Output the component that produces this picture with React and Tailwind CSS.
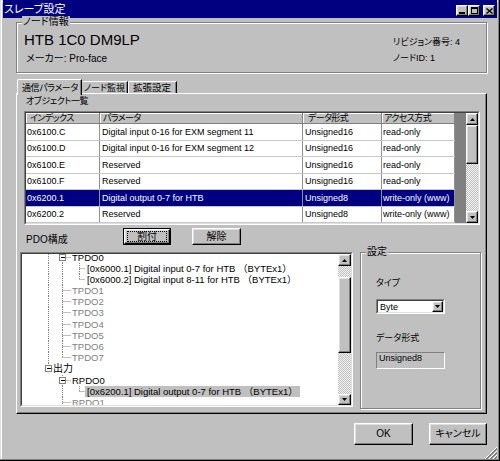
import React from "react";

// win98-ish bevels
const raised =
  "border border-t-white border-l-white border-r-black border-b-black shadow-[inset_-1px_-1px_0_#808080,inset_1px_1px_0_#dfdfdf]";
const etched = "border border-[#808080] shadow-[1px_1px_0_#fff,inset_1px_1px_0_#fff]";
const track =
  "bg-[image:repeating-conic-gradient(#c0c0c0_0_25%,#f2f2f2_0_50%)] bg-[length:2px_2px]";

const Sunken = ({ className = "", inner = "", children }) => (
  <div className={`border border-t-[#808080] border-l-[#808080] border-r-white border-b-white ${className}`}>
    <div className={`h-full w-full border border-t-[#404040] border-l-[#404040] border-r-[#dfdfdf] border-b-[#dfdfdf] ${inner}`}>
      {children}
    </div>
  </div>
);

const Arrow = ({ up }) => (
  <svg width="5" height="3" viewBox="0 0 5 3">
    <polygon points={up ? "2.5,0 5,3 0,3" : "0,0 5,0 2.5,3"} fill="#000" />
  </svg>
);

const TitleBtn = ({ children, className = "" }) => (
  <div className={`${raised} flex h-[11px] w-[12px] items-center justify-center bg-[#c0c0c0] ${className}`}>
    {children}
  </div>
);

const objects = [
  { idx: "0x6100.C", name: "Digital input 0-16 for EXM segment 11", type: "Unsigned16", access: "read-only" },
  { idx: "0x6100.D", name: "Digital input 0-16 for EXM segment 12", type: "Unsigned16", access: "read-only" },
  { idx: "0x6100.E", name: "Reserved", type: "Unsigned16", access: "read-only" },
  { idx: "0x6100.F", name: "Reserved", type: "Unsigned16", access: "read-only" },
  { idx: "0x6200.1", name: "Digital output 0-7 for HTB", type: "Unsigned8", access: "write-only (www)", sel: true },
  { idx: "0x6200.2", name: "Reserved", type: "Unsigned8", access: "write-only (www)" },
];

// tree connector x positions (svg coords, tree content starts at page x 22)
const L0 = 26.5;
const L1 = 40.5;
const L2 = 57.5;
const RH = 11.2;
const MID = 5.5;

const tree = [
  { w: 50, label: "TPDO0", segs: [["v", L0], ["v", L1], ["b", L2], ["h", L1, 49], ["box", L1]] },
  { w: 63, entry: true, label: "[0x6000.1] Digital input 0-7 for HTB （BYTEx1）", segs: [["v", L0], ["v", L1], ["v", L2], ["h", L2, 63]] },
  { w: 63, entry: true, label: "[0x6000.2] Digital input 8-11 for HTB （BYTEx1）", segs: [["v", L0], ["v", L1], ["t", L2], ["h", L2, 63]] },
  ...["TPDO1", "TPDO2", "TPDO3", "TPDO4", "TPDO5", "TPDO6"].map((l) => ({
    w: 50,
    gray: true,
    label: l,
    segs: [["v", L0], ["v", L1], ["h", L1, 49]],
  })),
  { w: 50, gray: true, label: "TPDO7", segs: [["v", L0], ["t", L1], ["h", L1, 49]] },
  { w: 31, label: "出力", segs: [["t", L0], ["h", L0, 31], ["box", L0]] },
  { w: 50, label: "RPDO0", segs: [["v", L1], ["b", L2], ["h", L1, 49], ["box", L1]] },
  { w: 63, entry: true, sel: true, label: "[0x6200.1] Digital output 0-7 for HTB （BYTEx1）", segs: [["v", L1], ["t", L2], ["h", L2, 63]] },
  { w: 50, gray: true, label: "RPDO1", segs: [["v", L1], ["h", L1, 49]] },
];

const Seg = ({ s }) => {
  const line = { stroke: "#808080", strokeDasharray: "1 1" };
  if (s[0] === "v") return <line x1={s[1]} y1={0} x2={s[1]} y2={RH} {...line} />;
  if (s[0] === "t") return <line x1={s[1]} y1={0} x2={s[1]} y2={MID} {...line} />;
  if (s[0] === "b") return <line x1={s[1]} y1={MID} x2={s[1]} y2={RH} {...line} />;
  if (s[0] === "h") return <line x1={s[1]} y1={MID} x2={s[2]} y2={MID} {...line} />;
  return (
    <g>
      <rect x={s[1] - 3} y={MID - 3} width="6" height="6" fill="#fff" stroke="#808080" />
      <line x1={s[1] - 1.5} y1={MID} x2={s[1] + 2.5} y2={MID} stroke="#000" />
    </g>
  );
};

export default function App() {
  return (
    <div className="flex h-[461px] w-[500px] flex-col overflow-hidden bg-[#c0c0c0] font-['Liberation_Sans','Noto_Sans_CJK_JP',sans-serif] text-[10px] leading-[12px] text-black shadow-[inset_-1px_-1px_0_#000,inset_-2px_-2px_0_#808080,inset_1px_1px_0_#dfdfdf,inset_2px_2px_0_#fff] [font-feature-settings:'palt']">
      {/* Title bar */}
      <div className="mx-[3px] flex h-[18px] shrink-0 items-start justify-between bg-[#000080] pl-[1px] pr-[2px]">
        <span className="mt-[3px] text-[11px] leading-[13px] text-white">スレーブ設定</span>
        <div className="mt-[5px] flex">
          <TitleBtn>
            <svg width="6" height="7" viewBox="0 0 6 7">
              <rect x="0" y="5" width="6" height="2" fill="#000" />
            </svg>
          </TitleBtn>
          <TitleBtn>
            <svg width="7" height="7" viewBox="0 0 7 7">
              <rect x="0.5" y="0.5" width="6" height="6" fill="none" stroke="#000" />
              <rect x="0" y="0" width="7" height="2" fill="#000" />
            </svg>
          </TitleBtn>
          <TitleBtn className="ml-[3px]">
            <svg width="7" height="6" viewBox="0 0 7 6">
              <path d="M0.5 0.5 L6.5 5.5 M6.5 0.5 L0.5 5.5" stroke="#000" strokeWidth="1.4" />
            </svg>
          </TitleBtn>
        </div>
      </div>

      {/* Node info group */}
      <div className={`${etched} ml-[16px] mt-[4px] h-[51px] w-[471px] shrink-0`}>
        <div className="-mt-[7px] ml-[5px] w-fit bg-[#c0c0c0] px-[1px]">ノード情報</div>
        <div className="flex">
          <div className="flex-1 pl-[7px]">
            <div className="mt-[3px] text-[15px] leading-[18px]">HTB 1C0 DM9LP</div>
            <div className="ml-[2px] mt-[4px]">メーカー: Pro-face</div>
          </div>
          <div className="w-[93px] pt-[8px] text-[9px]">
            <div>リビジョン番号: 4</div>
            <div className="mt-[4px]">ノードID: 1</div>
          </div>
        </div>
      </div>

      {/* Tabs */}
      <div className="ml-[17px] mt-[6px] flex h-[14px] shrink-0 items-start whitespace-nowrap">
        <div className="relative z-10 h-[16px] w-[65px] rounded-tl-[2px] border-l border-r border-t border-l-white border-r-black border-t-white bg-[#c0c0c0] pl-[4px] pt-[2px] text-[9px] tracking-[-0.4px] shadow-[inset_-1px_0_0_#808080]">
          通信パラメータ
        </div>
        <div className="mt-[2px] h-[12px] w-[46px] rounded-tl-[2px] border-r border-t border-r-black border-t-white pl-[2px] text-[9px] shadow-[inset_-1px_0_0_#808080]">
          ノード監視
        </div>
        <div className="mt-[2px] h-[12px] w-[49px] rounded-tl-[2px] border-l border-r border-t border-l-white border-r-black border-t-white pl-[4px] text-[9.5px] shadow-[inset_-1px_0_0_#808080]">
          拡張設定
        </div>
      </div>

      {/* Tab panel */}
      <div className="ml-[16px] h-[321px] w-[471px] shrink-0 border border-b-black border-l-white border-r-black border-t-white shadow-[inset_-1px_-1px_0_#808080]">
        <div className="ml-[9px] mt-[1px] text-[9px] tracking-[-0.4px]">オブジェクト一覧</div>

        {/* Object list */}
        <Sunken className="ml-[7px] mt-[4px] h-[114px] w-[456px]" inner="flex bg-white">
          <div className="flex w-[429px] flex-col">
            <div className="flex h-[11px] bg-[#c0c0c0] text-[9px] leading-[10px] tracking-[-0.6px] whitespace-nowrap">
              <div className="w-[74px] border-b border-r border-b-[#808080] border-r-[#808080] pl-[4px] shadow-[inset_1px_1px_0_#fff]">インデックス</div>
              <div className="w-[203px] border-b border-r border-b-[#808080] border-r-[#808080] pl-[3px] shadow-[inset_1px_1px_0_#fff]">パラメータ</div>
              <div className="w-[79px] border-b border-r border-b-[#808080] border-r-[#808080] pl-[5px] shadow-[inset_1px_1px_0_#fff]">データ形式</div>
              <div className="w-[73px] border-b border-r border-b-[#808080] border-r-[#808080] pl-[2px] shadow-[inset_1px_1px_0_#fff]">アクセス方式</div>
            </div>
            {objects.map((r) => (
              <div
                key={r.idx}
                className={`flex h-[16.5px] border-b border-[#c8c8c8] text-[9px] whitespace-nowrap ${
                  r.sel ? "bg-[#000080] text-white" : "bg-white text-black"
                }`}
              >
                <div className="flex w-[74px] items-center border-r border-[#909090] pl-[1px]">{r.idx}</div>
                <div className="flex w-[203px] items-center overflow-hidden border-r border-[#909090] pl-[2px]">{r.name}</div>
                <div className="flex w-[79px] items-center border-r border-[#909090] pl-[2px]">{r.type}</div>
                <div className="flex w-[73px] items-center border-r border-[#909090] pl-[1px]">{r.access}</div>
              </div>
            ))}
          </div>
          <div className="w-[11px] bg-[#808080]" />
          <div className="flex w-[12px] flex-col">
            <div className={`${raised} flex h-[12px] items-center justify-center bg-[#c0c0c0]`}>
              <Arrow up />
            </div>
            <div className={`${raised} h-[39px] bg-[#c0c0c0]`} />
            <div className={`flex-1 ${track}`} />
            <div className={`${raised} flex h-[12px] items-center justify-center bg-[#c0c0c0]`}>
              <Arrow />
            </div>
          </div>
        </Sunken>

        {/* PDO buttons */}
        <div className="mt-[3px] flex h-[17px]">
          <div className="ml-[9px] mt-[6px] w-[97px]">PDO構成</div>
          <div className="h-[17px] w-[48px] border border-black">
            <div className={`${raised} flex h-full items-center justify-center`}>
              <span className="border border-dotted border-black px-[9px] leading-[9px]">割付</span>
            </div>
          </div>
          <div className={`${raised} ml-[21px] flex h-[17px] w-[49px] items-center justify-center`}>解除</div>
        </div>

        <div className="ml-[3px] mt-[7px] flex items-start gap-[7px]">
          {/* PDO tree */}
          <Sunken className="h-[155px] w-[333px]" inner="flex overflow-hidden bg-white">
            <div className="flex-1 overflow-hidden [font-feature-settings:normal]">
              <div className="-mt-[2.5px]">
                {tree.map((n, i) => (
                  <div key={i} className="flex h-[11.2px] items-center whitespace-nowrap">
                    <svg className="shrink-0" width={n.w} height={RH} viewBox={`0 0 ${n.w} ${RH}`}>
                      {n.segs.map((s, j) => (
                        <Seg key={j} s={s} />
                      ))}
                    </svg>
                    <span
                      className={`h-[11.2px] text-[9.5px] leading-[11.2px] ${n.entry ? "px-[2px]" : ""} ${
                        n.sel ? "bg-[#c0c0c0]" : ""
                      } ${n.gray ? "text-[#808080]" : "text-black"} ${n.label === "出力" ? "text-[10px]" : ""}`}
                    >
                      {n.label}
                    </span>
                  </div>
                ))}
              </div>
            </div>
            <div className="flex w-[13px] shrink-0 flex-col">
              <div className={`${raised} flex h-[12px] items-center justify-center bg-[#c0c0c0]`}>
                <Arrow up />
              </div>
              <div className={`h-[11px] ${track}`} />
              <div className={`${raised} h-[76px] bg-[#c0c0c0]`} />
              <div className={`flex-1 ${track}`} />
              <div className={`${raised} flex h-[11px] items-center justify-center bg-[#c0c0c0]`}>
                <Arrow />
              </div>
            </div>
          </Sunken>

          {/* Settings group */}
          <div className={`${etched} h-[157px] w-[121px]`}>
            <div className="-mt-[7px] ml-[5px] w-fit bg-[#c0c0c0] px-[1px]">設定</div>
            <div className="pl-[15px] text-[9px]">
              <div className="mt-[19px]">タイプ</div>
              <Sunken className="mt-[10px] h-[15px] w-[69px]" inner="flex items-center justify-between bg-white">
                <span className="pl-[2px]">Byte</span>
                <div className={`${raised} flex h-[11px] w-[11px] items-center justify-center bg-[#c0c0c0]`}>
                  <Arrow />
                </div>
              </Sunken>
              <div className="mt-[18px]">データ形式</div>
              <div className="mt-[8px] h-[17px] w-[69px] border border-b-white border-l-[#808080] border-r-white border-t-[#808080] pl-[2px] leading-[11px]">
                Unsigned8
              </div>
            </div>
          </div>
        </div>
      </div>

      {/* Dialog buttons */}
      <div className="ml-[354px] mt-[9px] flex shrink-0 gap-[16px]">
        <div className={`${raised} flex h-[22px] w-[59px] items-center justify-center`}>OK</div>
        <div className={`${raised} flex h-[22px] w-[58px] items-center justify-center`}>キャンセル</div>
      </div>

      <div className="mr-[3px] mt-[2px] flex shrink-0 justify-end">
        <svg width="12" height="12" viewBox="0 0 12 12">
          {[0, 4, 8].map((o) => (
            <g key={o}>
              <line x1={o} y1={12} x2={12} y2={o} stroke="#fff" />
              <line x1={o + 1} y1={12} x2={12} y2={o + 1} stroke="#808080" />
              <line x1={o + 2} y1={12} x2={12} y2={o + 2} stroke="#808080" />
            </g>
          ))}
        </svg>
      </div>
    </div>
  );
}
